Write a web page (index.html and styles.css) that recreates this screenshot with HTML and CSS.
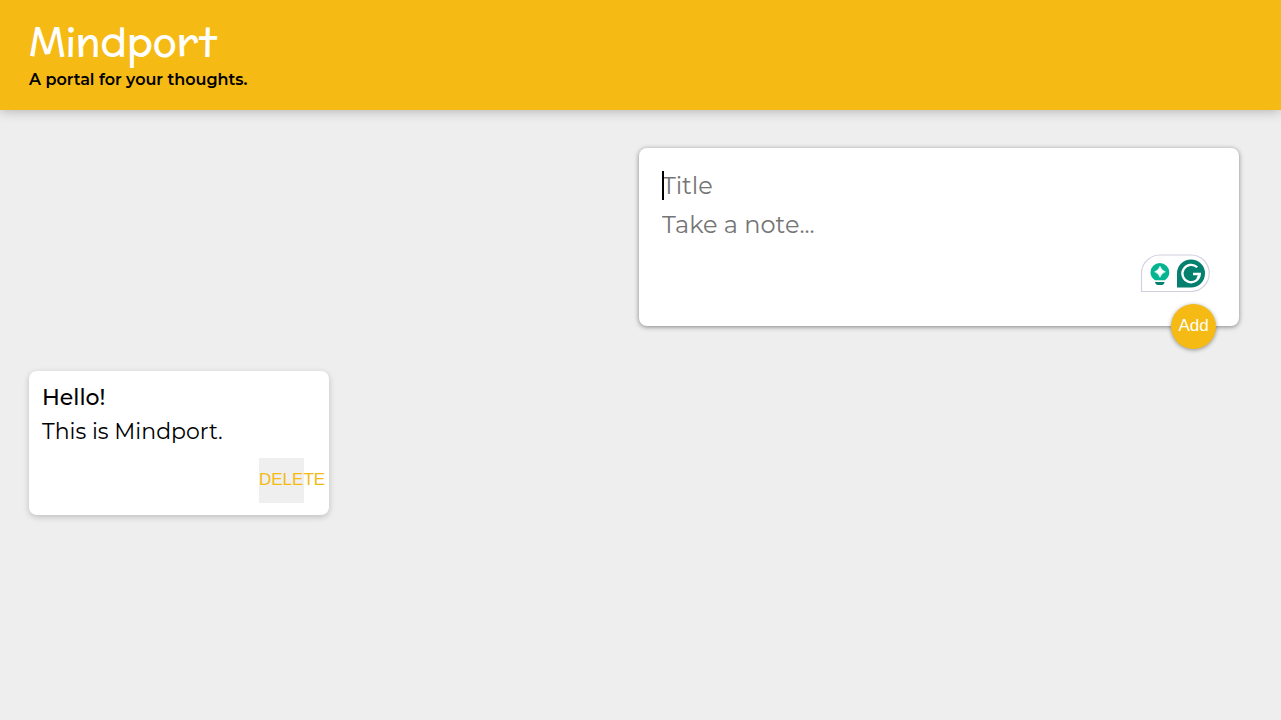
FILE: index.html
```html
<!DOCTYPE html>
<html lang="en">
<head>
<meta charset="utf-8">
<meta name="viewport" content="width=device-width, initial-scale=1">
<title>Mindport</title>
<link rel="stylesheet" href="styles.css">
</head>
<body>
<header class="site-header">
  <h1 class="brand">Mindport</h1>
  <p class="tagline">A portal for your thoughts.</p>
</header>
<main class="content">
  <form class="note-form">
    <div class="field">
      <input class="title-input" type="text" name="title" placeholder="Title" aria-label="Title">
      <span class="caret"></span>
    </div>
    <textarea class="body-input" name="content" rows="1" placeholder="Take a note..." aria-label="Take a note"></textarea>
    <svg class="assistant" width="70" height="39" viewBox="0 0 70 39" aria-hidden="true">
      <path d="M1.5 37.500V19.500A18.500 18.500 0 0 1 20 1H51A18.250 18.250 0 0 1 51 37.500Z" fill="#fff" stroke="#d0d1e0" stroke-width="1.200"/>
      <path d="M19.800 9a9.500 9.500 0 0 0-9.300 9.500c0 3.500 2 6 4.500 7.700h9.800c2.500-1.700 4.500-4.200 4.500-7.700A9.500 9.500 0 0 0 19.800 9Z" fill="#05b592"/>
      <path d="M20 12.300q1.400 4.200 5.400 5.500q-4 1.300-5.400 5.500q-1.400-4.200-5.400-5.500q4-1.300 5.400-5.500Z" fill="#fff" stroke="#fff" stroke-width=".6"/>
      <path d="M15 28h9.600q-.6 3-3 3h-3.600q-2.400 0-3-3Z" fill="#04806e"/>
      <path d="M37 33.500V19.500A14 14 0 1 1 51 33.500Z" fill="#04806e"/>
      <path d="M57.200 13.300A8.700 8.700 0 1 0 59.800 20H53M59.800 20L57.500 24.500" fill="none" stroke="#fff" stroke-width="2.300"/>
    </svg>
    <button class="add-button" type="button">Add</button>
  </form>
  <section class="notes">
    <article class="note">
      <h2 class="note-title">Hello!</h2>
      <p class="note-body">This is Mindport.</p>
      <button class="delete-button" type="button">DELETE</button>
    </article>
  </section>
</main>
</body>
</html>
```
FILE: styles.css
```css
* {
  box-sizing: border-box;
  margin: 0;
  padding: 0;
}

body {
  min-height: 100vh;
  background: #eee;
  color: #000;
  font-family: Montserrat, Inter, sans-serif;
}

.site-header {
  padding: 16px 29px 18px;
  background: #f5ba13;
  box-shadow: 0 0 12px rgba(0, 0, 0, 0.3);
}

.brand {
  color: #fff;
  font: 400 40px/51px McLaren, Lato, sans-serif;
}

.tagline {
  font-size: 16px;
  font-weight: 600;
  line-height: 25px;
}

.content {
  padding: 38px 42px 40px 29px;
}

.note-form {
  position: relative;
  display: flex;
  flex-direction: column;
  width: 100%;
  max-width: 600px;
  min-height: 178px;
  margin-left: auto;
  padding: 18px 23px;
  border-radius: 8px;
  background: #fff;
  box-shadow: 0 1px 5px rgba(0, 0, 0, 0.45);
}

.field {
  position: relative;
}

.title-input,
.body-input {
  display: block;
  width: 100%;
  border: 0;
  outline: 0;
  background: transparent;
  font: 400 24px/39px Montserrat, Inter, sans-serif;
  resize: none;
}

.title-input {
  height: 39px;
}

.title-input::placeholder,
.body-input::placeholder {
  color: #757575;
}

.caret {
  position: absolute;
  top: 5px;
  left: 0;
  width: 2px;
  height: 29px;
  background: #000;
}

.assistant {
  position: absolute;
  right: 29px;
  bottom: 33px;
}

.add-button {
  position: absolute;
  right: 23px;
  bottom: -23px;
  width: 45px;
  height: 45px;
  padding-bottom: 2px;
  border: 0;
  border-radius: 50%;
  background: #f5ba13;
  color: #fff;
  box-shadow: 0 1px 4px rgba(0, 0, 0, 0.4);
  font: 400 17px "Liberation Sans", Arial, sans-serif;
}

.notes {
  display: flex;
  flex-wrap: wrap;
  gap: 16px;
  margin-top: 45px;
}

.note {
  display: flex;
  flex-direction: column;
  width: 300px;
  padding: 10px 25px 12px 13px;
  border-radius: 8px;
  background: #fff;
  box-shadow: 0 2px 6px rgba(0, 0, 0, 0.2);
}

.note-title,
.note-body {
  font-size: 22px;
  line-height: 34px;
}

.note-title {
  font-weight: 500;
}

.note-body {
  font-weight: 400;
}

.delete-button {
  align-self: flex-end;
  width: 45px;
  height: 45px;
  margin-top: 9px;
  padding-bottom: 2px;
  border: 0;
  background: #efefef;
  color: #f5ba13;
  font: 400 17px "Liberation Sans", Arial, sans-serif;
  text-align: left;
  white-space: nowrap;
}
```
